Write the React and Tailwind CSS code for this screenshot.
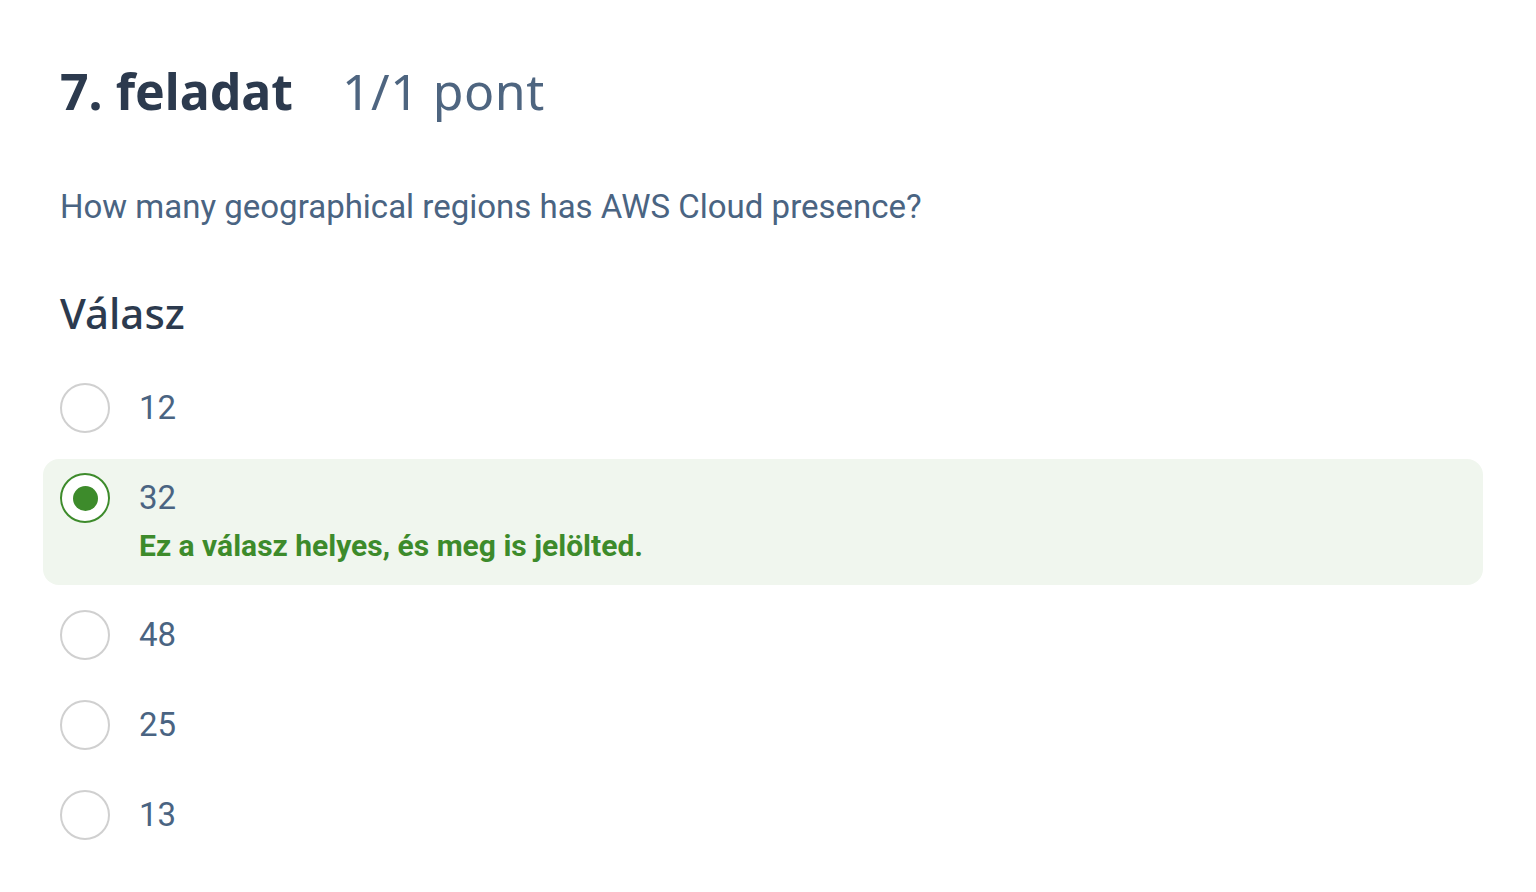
import { useState } from "react";

const options = [
  { id: "a", label: "12" },
  { id: "b", label: "32", correct: true },
  { id: "c", label: "48" },
  { id: "d", label: "25" },
  { id: "e", label: "13" },
];

const Radio = ({ checked }) => (
  <span
    className={`flex h-[50px] w-[50px] shrink-0 items-center justify-center rounded-full border-2 bg-white ${
      checked ? "border-[#3d8b2b]" : "border-[#d0d0d0]"
    }`}
  >
    {checked && <span className="h-[25px] w-[25px] rounded-full bg-[#3d8b2b]" />}
  </span>
);

const App = () => {
  const [selected] = useState("b");

  return (
    <div className="min-h-screen bg-white">
      <div className="ml-[43px] w-[1440px] pt-[61px]">
        {/* Task header */}
        <h1 className="flex items-baseline px-[17px] font-['Noto_Sans',sans-serif] text-[50px] leading-[60px]">
          <span className="font-bold text-[#2c3a4e]">7. feladat</span>
          <span className="ml-[49px] font-normal tracking-[0.5px] text-[#4e6580]">1/1 pont</span>
        </h1>

        <p className="mt-[63px] px-[17px] font-['Roboto',sans-serif] text-[33px] leading-[45px] text-[#4a6482]">
          How many geographical regions has AWS Cloud presence?
        </p>

        <h2 className="mt-[60px] px-[17px] font-['Noto_Sans',sans-serif] text-[42px] font-medium leading-[48px] text-[#2c3a4e]">
          Válasz
        </h2>

        {/* Answer options */}
        <div className="mt-[32px] flex flex-col gap-[12px]">
          {options.map((opt) => {
            const isSel = selected === opt.id;
            return (
              <label
                key={opt.id}
                className={`flex cursor-pointer gap-[29px] rounded-2xl px-[17px] pt-[14px] ${
                  isSel ? "-mb-[1px] bg-[#f0f6ee] pb-[16px]" : "pb-[14px]"
                }`}
              >
                <Radio checked={isSel} />
                <div className="font-['Roboto',sans-serif]">
                  <div className="flex h-[50px] items-center text-[33px] text-[#4a6482]">
                    {opt.label}
                  </div>
                  {isSel && opt.correct && (
                    <p className="text-[30px] font-bold leading-[46px] text-[#3d8b2b]">
                      Ez a válasz helyes, és meg is jelölted.
                    </p>
                  )}
                </div>
              </label>
            );
          })}
        </div>
      </div>
    </div>
  );
};

export default App;
